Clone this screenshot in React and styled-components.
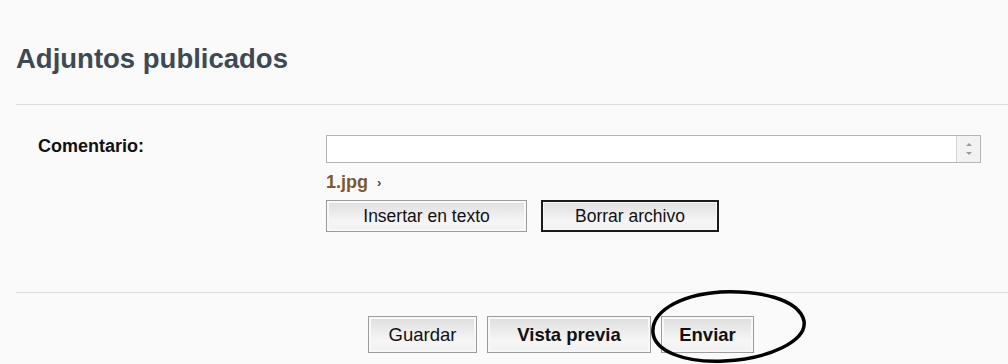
import styled, { createGlobalStyle } from 'styled-components';

const GlobalStyle = createGlobalStyle`
    html, body {
        margin: 0;
        padding: 0;
        background: #fafafa;
        font-family: "Liberation Sans", Arial, sans-serif;
    }
`

const Page = styled.div`
    width: 1008px;
    height: 364px;
    overflow: hidden;
    padding-left: 16px;
    box-sizing: border-box;
`

const Title = styled.h2`
    margin: 0;
    padding: 43px 0 0 0;
    height: 105px;
    box-sizing: border-box;
    font-size: 27.5px;
    line-height: 32px;
    font-weight: bold;
    color: #3d4954;
    border-bottom: 1px solid #dcdcdc;
`

const FormRow = styled.div`
    display: grid;
    grid-template-columns: 288px 655px;
    padding: 30px 0 0 22px;
    height: 188px;
    box-sizing: border-box;
    border-bottom: 1px solid #dcdcdc;
`

const Label = styled.label`
    font-size: 18px;
    font-weight: bold;
    color: #111;
    line-height: 21px;
    padding-top: 1px;
`

const Field = styled.div`
    display: flex;
    flex-direction: column;
`

const TextBox = styled.div`
    display: flex;
    height: 28px;
    box-sizing: border-box;
    border: 1px solid #b4b4b4;
    background: #fff;
`

const TextArea = styled.textarea`
    flex: 1;
    border: none;
    outline: none;
    resize: none;
    background: transparent;
    font-family: inherit;
    font-size: 14px;
`

const Spinner = styled.div`
    width: 23px;
    border-left: 1px solid #d4d4d4;
    background: #f2f2f2;
    display: flex;
    flex-direction: column;
    align-items: center;
    justify-content: space-evenly;

    span {
        width: 0;
        height: 0;
        border-left: 3px solid transparent;
        border-right: 3px solid transparent;
    }
    span.up {
        border-bottom: 3px solid #9a9a9a;
    }
    span.down {
        border-top: 3px solid #9a9a9a;
    }
`

const FileLine = styled.div`
    display: flex;
    align-items: center;
    gap: 9px;
    margin-top: 9px;
    height: 21px;
    font-size: 18px;
    font-weight: bold;
    color: #7b5a2c;

    small {
        font-size: 13px;
        color: #444;
        font-weight: bold;
    }
`

const ButtonRow = styled.div`
    display: flex;
    gap: ${props => props.gap || 14}px;
    margin-top: ${props => props.top || 0}px;
    padding-left: ${props => props.indent || 0}px;
`

const Button = styled.button`
    height: ${props => props.tall ? 37 : 32}px;
    width: ${props => props.w}px;
    box-sizing: border-box;
    padding: 0;
    font-family: "Liberation Sans", Arial, sans-serif;
    font-size: ${props => props.tall ? 18.5 : 17.5}px;
    font-weight: ${props => props.bold ? 'bold' : 'normal'};
    color: #111;
    background: linear-gradient(#dedede, #f6f6f6 70%, #f0f0f0);
    border: 1px solid ${props => props.focused ? '#1a1a1a' : '#9c9c9c'};
    box-shadow: inset 0 0 0 ${props => props.focused ? 1 : 0}px #1a1a1a, inset 0 0 0 2px #f8f8f8;
`

const Marked = styled.div`
    position: relative;
`

const Ring = styled.svg`
    position: absolute;
    left: -12px;
    top: -27px;
    pointer-events: none;
`

export default function App() {
    return (
        <Page>
            <GlobalStyle />
            <Title>Adjuntos publicados</Title>
            <FormRow>
                <Label>Comentario:</Label>
                <Field>
                    <TextBox>
                        <TextArea />
                        <Spinner>
                            <span className="up" />
                            <span className="down" />
                        </Spinner>
                    </TextBox>
                    <FileLine>1.jpg <small>›</small></FileLine>
                    <ButtonRow top={7}>
                        <Button w={201}>Insertar en texto</Button>
                        <Button w={178} focused>Borrar archivo</Button>
                    </ButtonRow>
                </Field>
            </FormRow>
            <ButtonRow indent={352} top={23} gap={10}>
                <Button w={109} tall>Guardar</Button>
                <Button w={164} tall bold>Vista previa</Button>
                <Marked>
                    <Button w={93} tall bold>Enviar</Button>
                    <Ring width="160" height="76" viewBox="0 0 160 76">
                        <path
                            d="M70 3 C 110 1, 150 10, 155 32 C 158 52, 120 70, 75 72 C 35 74, 6 62, 4 44 C 2 24, 28 6, 72 3"
                            fill="none"
                            stroke="#000"
                            strokeWidth="3.5"
                        />
                    </Ring>
                </Marked>
            </ButtonRow>
        </Page>
    )
}
